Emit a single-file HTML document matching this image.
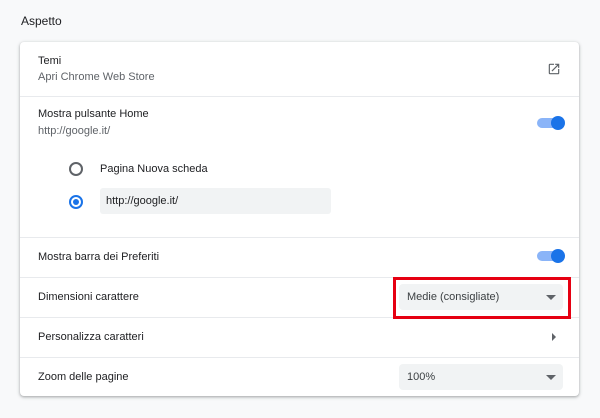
<html><head><style>
body{margin:0;width:600px;height:418px;background:#f8f9fa;font-family:"Liberation Sans",sans-serif;font-size:11px;color:#202124;position:relative;overflow:hidden}
.a{position:absolute}
.card{position:absolute;left:20px;top:42px;width:559px;height:354px;background:#fff;border-radius:4px;box-shadow:0 1px 2px rgba(60,64,67,.3),0 1px 3px 1px rgba(60,64,67,.15)}
.hr{position:absolute;left:0;right:0;height:1px;background:#e8eaed}
.sec{color:#5f6368}
.tg{position:absolute;width:24px;height:10px;border-radius:5px;background:#8ab4f8}
.tg:after{content:"";position:absolute;right:-4px;top:-2px;width:14px;height:14px;border-radius:50%;background:#1a73e8}
.sel{position:absolute;background:#f1f3f4;border-radius:4px;height:26px;width:164px;left:379px;line-height:27px;padding-left:8px;box-sizing:border-box;color:#3c4043}
.sel:after{content:"";position:absolute;right:7px;top:11px;border:5px solid transparent;border-top:5px solid #5f6368;border-bottom:0}
</style></head><body>
<div class="a" style="left:21px;top:14px;font-size:12px;color:#202124">Aspetto</div>
<div class="card">
<div class="a" style="left:18px;top:13px">Temi</div>
<div class="a sec" style="left:18px;top:29px">Apri Chrome Web Store</div>
<svg class="a" style="left:527px;top:20px" width="14" height="14" viewBox="0 0 24 24"><path d="M19 19H5V5h7V3H5a2 2 0 0 0-2 2v14a2 2 0 0 0 2 2h14c1.1 0 2-.9 2-2v-7h-2v7zM14 3v2h3.590l-9.83 9.83 1.41 1.41L19 6.41V10h2V3h-7z" fill="#5f6368"/></svg>
<div class="hr" style="top:54px"></div>
<div class="a" style="left:18px;top:66px">Mostra pulsante Home</div>
<div class="a sec" style="left:18px;top:83px">http://google.it/</div>
<div class="tg" style="left:517px;top:76px"></div>
<div class="a" style="left:49px;top:120px;width:10px;height:10px;border:2px solid #5f6368;border-radius:50%"></div>
<div class="a" style="left:80px;top:121px">Pagina Nuova scheda</div>
<div class="a" style="left:49px;top:153px;width:10px;height:10px;border:2px solid #1a73e8;border-radius:50%"></div>
<div class="a" style="left:53px;top:157px;width:6px;height:6px;background:#1a73e8;border-radius:50%"></div>
<div class="a" style="left:80px;top:146px;width:231px;height:26px;background:#f1f3f4;border-radius:3px;line-height:27px;padding-left:6px;box-sizing:border-box">http://google.it/</div>
<div class="hr" style="top:195px"></div>
<div class="a" style="left:18px;top:209px">Mostra barra dei Preferiti</div>
<div class="tg" style="left:517px;top:209px"></div>
<div class="hr" style="top:235px"></div>
<div class="a" style="left:18px;top:249px">Dimensioni carattere</div>
<div class="sel" style="top:242px">Medie (consigliate)</div>
<div class="hr" style="top:275px"></div>
<div class="a" style="left:18px;top:289px">Personalizza caratteri</div>
<div class="a" style="left:532px;top:291px;border:4px solid transparent;border-left:4px solid #5f6368;border-right:0"></div>
<div class="hr" style="top:315px"></div>
<div class="a" style="left:18px;top:329px">Zoom delle pagine</div>
<div class="sel" style="top:322px">100%</div>
</div>
<div class="a" style="left:393px;top:277px;width:172px;height:36px;border:3px solid #e60012"></div>
</body></html>
